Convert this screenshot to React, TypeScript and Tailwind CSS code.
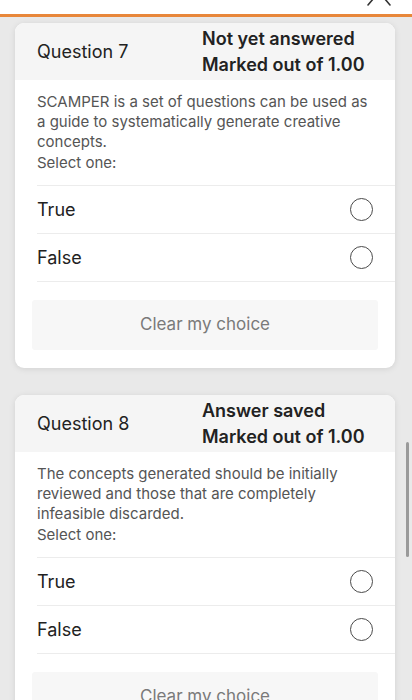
import React from "react";

type Q = { num: number; status: string; text: string[] };

const questions: Q[] = [
  {
    num: 7,
    status: "Not yet answered",
    text: ["SCAMPER is a set of questions can be used as a guide to systematically generate creative concepts."],
  },
  {
    num: 8,
    status: "Answer saved",
    text: ["The concepts generated should be initially reviewed and those that are completely infeasible discarded."],
  },
];

function Radio() {
  return <span className="block w-[23px] h-[23px] rounded-full border-[1.5px] border-[#4a4a4a] bg-white" />;
}

function Card({ q }: { q: Q }) {
  return (
    <div className="ml-[15px] w-[380px] bg-white rounded-[9px] shadow-[0_1px_6px_rgba(0,0,0,0.10)] overflow-hidden">
      <div className="flex items-center bg-[#f5f5f5] h-[57px]">
        <div className="flex-1 pl-[22px] text-[18px] text-[#222]">Question {q.num}</div>
        <div className="w-[193px] text-[18px] font-semibold leading-[26px] text-[#222]">
          <div>{q.status}</div>
          <div>Marked out of 1.00</div>
        </div>
      </div>
      <div className="pt-[12px] pl-[22px]">
        <div className="pr-[18px] text-[15px] leading-[20px] text-[#555]">
          {q.text.map((t, i) => (
            <p key={i}>{t}</p>
          ))}
          <p className="mt-[1px]">Select one:</p>
        </div>
        <div className="mt-[12px] border-t border-[#ececec]">
          {["True", "False"].map((o) => (
            <div key={o} className="flex items-center justify-between h-[48px] border-b border-[#ececec] pr-[22px]">
              <span className="text-[18px] text-[#222]">{o}</span>
              <Radio />
            </div>
          ))}
        </div>
      </div>
      <div className="px-[17px] pt-[18px] pb-[18px]">
        <div className="h-[50px] flex items-center justify-center bg-[#f7f7f7] rounded-[3px] text-[17px] text-[#7a7a7a]">
          Clear my choice
        </div>
      </div>
    </div>
  );
}

export default function App() {
  return (
    <div
      className="relative w-[412px] h-[700px] overflow-hidden bg-[#e9e9e9]"
      style={{ fontFamily: "Inter, 'Noto Sans', sans-serif" }}
    >
      <div className="relative h-[14px] bg-white">
        <svg className="absolute left-[364px] top-0" width="30" height="6" viewBox="0 0 30 6">
          <path d="M15 -8 L4 5 M15 -8 L26 5" stroke="#333" strokeWidth="1.6" fill="none" strokeLinecap="round" />
        </svg>
      </div>
      <div className="h-[3px] bg-[#e8873a]" />
      <div className="pt-[6px] flex flex-col gap-[27px]">
        {questions.map((q) => (
          <Card key={q.num} q={q} />
        ))}
      </div>
      <div className="absolute left-[406px] top-[442px] w-[3px] h-[115px] rounded-full bg-[#9a9a9a]" />
    </div>
  );
}
